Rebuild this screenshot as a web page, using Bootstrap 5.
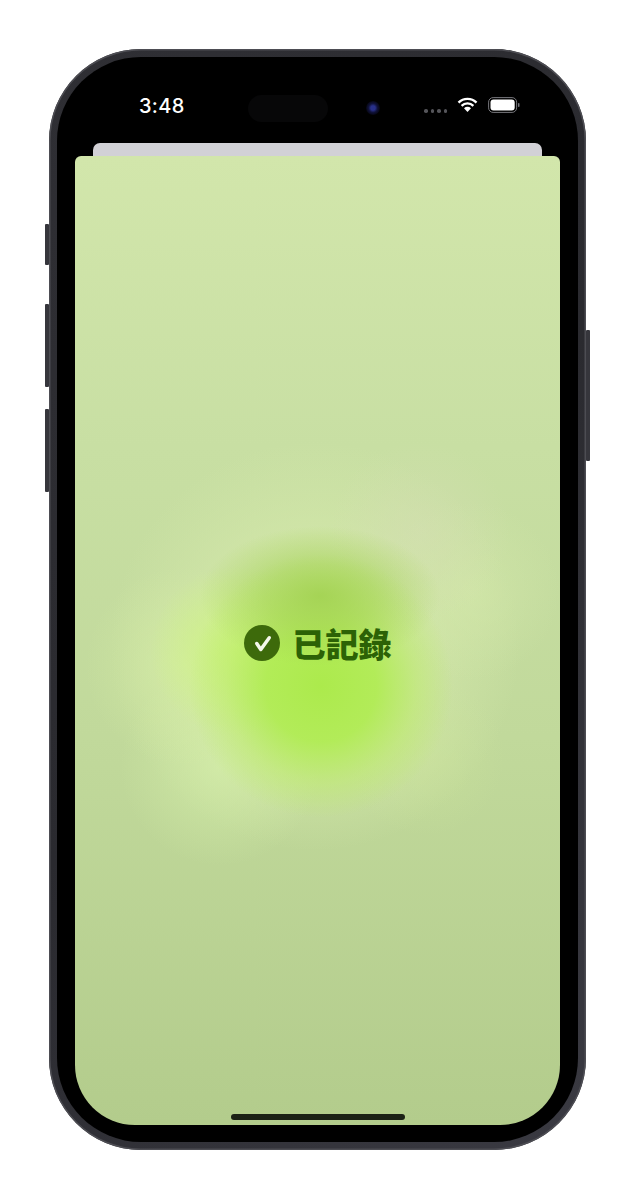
<!DOCTYPE html>
<html lang="zh-Hant">
<head>
<meta charset="utf-8">
<title>已記錄</title>
<link href="https://cdn.jsdelivr.net/npm/bootstrap@5.3.0/dist/css/bootstrap.min.css" rel="stylesheet">
<style>
html,body{margin:0;background:#fff;height:1200px;overflow:hidden}
.stage{padding:49px 0 0 49px}
.device{position:relative;width:537px;height:1101px;padding:8px;border-radius:92px;background:linear-gradient(135deg,#2f2f34,#2a2a2f 50%,#3a3a42);box-shadow:inset 0 0 0 1.5px #4d4d53}
.side-key{position:absolute;width:4px;background:#36363c;border-radius:1px}
.key-a{left:-4px;top:175px;height:41px}
.key-b{left:-4px;top:255px;height:83px}
.key-c{left:-4px;top:360px;height:83px}
.key-d{right:-4px;top:281px;height:131px}
.bezel{height:100%;background:#000;border-radius:84px;overflow:hidden}
.status-row{height:86px;padding-top:37px}
.clock{width:48px;margin-left:82px;color:#fff;font:500 20px/24px Inter,"Liberation Sans",sans-serif;letter-spacing:.3px}
.island{width:80px;height:27px;margin:1px 0 0 61px;border-radius:14px;background:#070708}
.lens{width:14px;height:14px;margin:7px 0 0 38px;border-radius:50%;background:radial-gradient(circle,#28308a 0 22%,#10123a 45%,#04040c 75%)}
.signal-dots{margin:15px 0 0 44px;gap:3px}
.signal-dots i{display:block;width:3.5px;height:3.5px;border-radius:50%;background:#55555a}
.wifi-mark{margin:3px 0 0 10px}
.battery-mark{margin:3px 0 0 10px}
.peek{height:13px;margin:0 36px;border-radius:7px 7px 0 0;background:#d2d1d6}
.screen{position:relative;height:969px;margin:0 18px;border-radius:6px 6px 60px 60px;overflow:hidden;padding-top:5px;
background:
 radial-gradient(ellipse 120px 70px at 245px 440px,rgba(160,208,78,.85) 0,rgba(162,210,80,.55) 45%,rgba(170,216,90,0) 100%),
 radial-gradient(circle 132px at 246px 530px,rgba(172,234,76,1) 0,rgba(176,236,82,.92) 42%,rgba(186,236,100,.5) 72%,rgba(190,236,110,0) 100%),
 radial-gradient(circle 85px at 160px 495px,rgba(204,246,120,.8),rgba(204,246,120,0)),
 radial-gradient(circle 100px at 110px 510px,rgba(216,240,165,.6),rgba(216,240,165,0)),
 radial-gradient(circle 100px at 145px 610px,rgba(214,240,170,.65),rgba(214,240,170,0)),
 radial-gradient(circle 90px at 345px 375px,rgba(212,222,178,.6),rgba(212,222,178,0)),
 radial-gradient(circle 90px at 395px 435px,rgba(212,232,170,.6),rgba(212,232,170,0)),
 radial-gradient(circle 80px at 350px 600px,rgba(204,228,155,.5),rgba(204,228,155,0)),
 radial-gradient(circle 205px at 240px 490px,rgba(212,232,170,.9) 0,rgba(212,232,170,.65) 55%,rgba(212,232,170,0) 100%),
 linear-gradient(180deg,#d2e6ab 0,#c8dfa3 30%,#c1d99b 60%,#b3cc8c 100%)}
.saved{height:100%;gap:13px}
.check-disc{display:block;width:36px;height:36px}
.saved-text{color:#2c6206;font:900 33px/1 "Noto Sans CJK TC","Liberation Sans",sans-serif}
.home-bar{position:absolute;left:156px;bottom:5px;width:174px;height:6px;border-radius:3px;background:#1c2216}
</style>
</head>
<body>
<div class="stage">
  <div class="device">
    <span class="side-key key-a"></span><span class="side-key key-b"></span><span class="side-key key-c"></span><span class="side-key key-d"></span>
    <div class="bezel d-flex flex-column">
      <div class="status-row d-flex align-items-start">
        <div class="clock">3:48</div>
        <div class="island"></div>
        <div class="lens"></div>
        <div class="signal-dots d-flex"><i></i><i></i><i></i><i></i></div>
        <svg class="wifi-mark" width="21" height="16" viewBox="0 0 21 16" aria-hidden="true"><path d="M1.500 5.600a12.800 12.800 0 0 1 18 0M4.600 8.800a8.400 8.400 0 0 1 11.800 0" fill="none" stroke="#fff" stroke-width="2.400"/><path d="M7 11.300a5 5 0 0 1 7 0L10.500 15z" fill="#fff"/></svg>
        <svg class="battery-mark" width="33" height="16" viewBox="0 0 33 16" aria-hidden="true"><rect x=".6" y=".6" width="28" height="14.800" rx="4.500" fill="none" stroke="#77777c" stroke-width="1"/><rect x="2.500" y="2.500" width="24.200" height="11" rx="3" fill="#fff"/><rect x="30" y="6" width="1.500" height="4" rx=".7" fill="#77777c"/></svg>
      </div>
      <div class="peek"></div>
      <div class="screen">
        <div class="saved d-flex align-items-center justify-content-center">
          <svg class="check-disc" viewBox="0 0 36 36" aria-hidden="true"><circle cx="18" cy="18" r="18" fill="#3d6a0b"/><path d="M12.750 18.500L16.800 24.500L25.250 12.750" fill="none" stroke="#f4f8ea" stroke-width="3.500" stroke-linecap="round" stroke-linejoin="round"/></svg>
          <span class="saved-text">已記錄</span>
        </div>
        <div class="home-bar"></div>
      </div>
    </div>
  </div>
</div>
<script src="https://cdn.jsdelivr.net/npm/bootstrap@5.3.0/dist/js/bootstrap.bundle.min.js"></script>
</body>
</html>
